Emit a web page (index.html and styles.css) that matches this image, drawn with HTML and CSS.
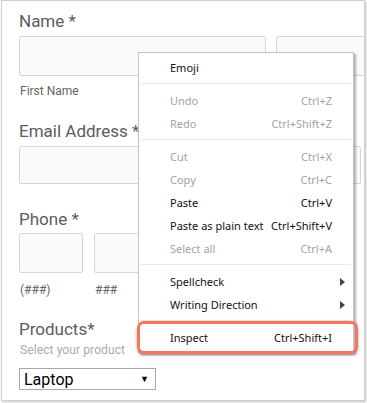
FILE: index.html
```html
<!DOCTYPE html>
<html lang="en">
<head>
    <meta charset="UTF-8">
    <title>Form with context menu</title>
    <link rel="stylesheet" href="styles.css">
</head>
<body>
    <!-- Form card -->
    <div class="frame">
        <div class="field">
            <div class="field-label">Name *</div>
            <div class="input-row">
                <div class="input input-first"></div>
                <div class="input input-last"></div>
            </div>
            <div class="sub-label">First Name</div>
        </div>

        <div class="field">
            <div class="field-label">Email Address *</div>
            <div class="input-row">
                <div class="input input-email"></div>
            </div>
        </div>

        <div class="field field-phone">
            <div class="field-label">Phone *</div>
            <div class="input-row phone-row">
                <div class="phone-part">
                    <div class="input input-phone"></div>
                    <div class="sub-label">(###)</div>
                </div>
                <div class="phone-part">
                    <div class="input input-phone"></div>
                    <div class="sub-label">###</div>
                </div>
            </div>
        </div>

        <div class="field field-products">
            <div class="field-label">Products*</div>
            <div class="hint">Select your product</div>
            <div class="select">
                <span>Laptop</span>
                <span class="select-arrow">&#9660;</span>
            </div>
        </div>
    </div>

    <!-- Right-click menu -->
    <div class="menu">
        <div class="item"><span class="label">Emoji</span></div>
        <div class="sep"></div>
        <div class="item disabled"><span class="label">Undo</span><span class="key">Ctrl+Z</span></div>
        <div class="item disabled"><span class="label">Redo</span><span class="key">Ctrl+Shift+Z</span></div>
        <div class="sep"></div>
        <div class="item disabled"><span class="label">Cut</span><span class="key">Ctrl+X</span></div>
        <div class="item disabled"><span class="label">Copy</span><span class="key">Ctrl+C</span></div>
        <div class="item"><span class="label">Paste</span><span class="key">Ctrl+V</span></div>
        <div class="item"><span class="label">Paste as plain text</span><span class="key">Ctrl+Shift+V</span></div>
        <div class="item disabled"><span class="label">Select all</span><span class="key">Ctrl+A</span></div>
        <div class="sep"></div>
        <div class="item"><span class="label">Spellcheck</span>
            <svg class="submenu" width="6" height="8" viewBox="0 0 6 8"><path d="M0 0L5 4L0 8Z" fill="#444"/></svg>
        </div>
        <div class="item"><span class="label">Writing Direction</span>
            <svg class="submenu" width="6" height="8" viewBox="0 0 6 8"><path d="M0 0L5 4L0 8Z" fill="#444"/></svg>
        </div>
        <div class="sep"></div>
        <div class="item"><span class="label">Inspect</span><span class="key">Ctrl+Shift+I</span></div>
    </div>

    <!-- Highlight around Inspect -->
    <div class="highlight"></div>
</body>
</html>
```

FILE: styles.css
```css
/* Page */
body {
    margin: 0;
    background: #fff;
    font-family: Roboto, "Noto Sans", sans-serif;
    position: relative;
    width: 367px;
    height: 403px;
    overflow: hidden;
}

.frame {
    box-sizing: border-box;
    width: 364px;
    height: 401px;
    margin-left: 1px;
    padding: 10px 0 0 17px;
    background: #fff;
    border: 1px solid #d0d0d0;
    box-shadow: 1px 1px 2px rgba(0, 0, 0, 0.25);
    overflow: hidden;
}

/* Form fields */
.field {
    display: flex;
    flex-direction: column;
}

.field + .field {
    margin-top: 22px;
}

.field.field-phone {
    margin-top: 25px;
}

.field.field-products {
    margin-top: 21px;
}

.field-label {
    font-size: 17px;
    line-height: 20px;
    color: #5c5c5c;
}

.input-row {
    display: flex;
    gap: 10px;
    margin-top: 5px;
}

.input {
    box-sizing: border-box;
    height: 40px;
    background: #fafafa;
    border: 1px solid #d6d6d6;
    border-radius: 2px;
    flex-shrink: 0;
}

.input-first { width: 247px; }
.input-last { width: 100px; }
.input-email { width: 342px; height: 38px; }

.phone-row {
    gap: 11px;
    margin-top: 4px;
}

.input-phone { width: 64px; }

.sub-label {
    margin-top: 7px;
    font-size: 12px;
    line-height: 16px;
    color: #666;
    padding-left: 1px;
}

.phone-part .sub-label {
    margin-top: 9px;
}

.hint {
    margin-top: 3px;
    font-size: 12px;
    line-height: 16px;
    color: #aaa;
    letter-spacing: 0.1px;
    padding-left: 1px;
}

.select {
    box-sizing: border-box;
    display: flex;
    align-items: center;
    justify-content: space-between;
    width: 137px;
    height: 22px;
    margin-top: 10px;
    padding: 0 6px 0 4px;
    border: 1px solid #a9a9a9;
    font-family: Roboto, Arial, sans-serif;
    font-size: 16px;
    color: #000;
}

.select-arrow {
    font-size: 9px;
}

/* Context menu */
.menu {
    position: absolute;
    left: 138px;
    top: 52px;
    width: 216px;
    box-sizing: border-box;
    padding: 3px 2px;
    background: #fff;
    border: 1px solid #c4c4c4;
    box-shadow: 2px 2px 2px rgba(0, 0, 0, 0.3);
    font-family: "Noto Sans", sans-serif;
    font-size: 11px;
    color: #111;
}

.item {
    display: flex;
    align-items: center;
    height: 23px;
    padding: 0 19px 0 29px;
}

.item .label {
    flex: 1;
}

.item.disabled {
    color: #a2a2a2;
}

.submenu {
    margin-right: -14px;
}

.sep {
    height: 1px;
    margin: 4px 0 5px;
    background: #e8e8e8;
}

.highlight {
    position: absolute;
    left: 137px;
    top: 321px;
    width: 221px;
    height: 33px;
    box-sizing: border-box;
    border: 3px solid #f4765c;
    border-radius: 7px;
    box-shadow: 0 1px 3px rgba(0, 0, 0, 0.35);
}
```
